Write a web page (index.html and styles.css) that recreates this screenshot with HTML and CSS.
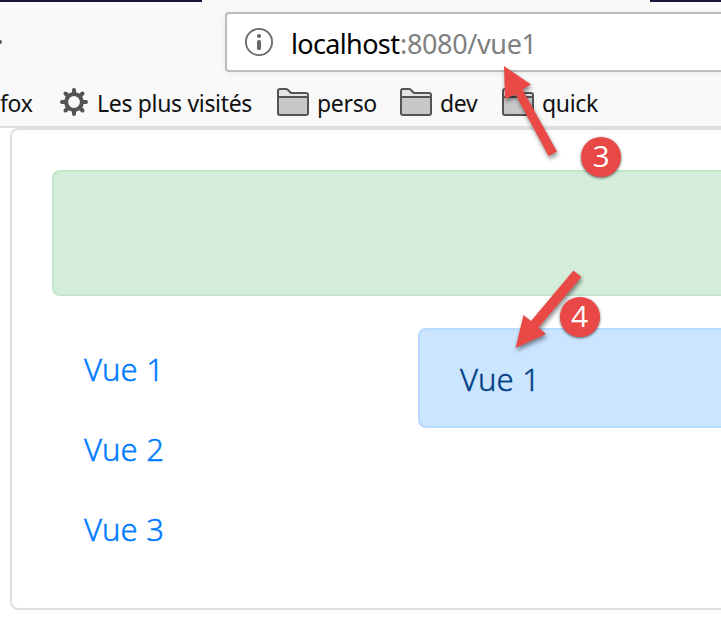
FILE: index.html
```html
<!DOCTYPE html>
<html lang="fr">
<head>
<meta charset="utf-8">
<title>Vue 1</title>
<link rel="stylesheet" href="styles.css">
</head>
<body>
<header class="browser">
  <div class="tabstrip"><span class="tab-left"></span><span class="tab-right"></span></div>
  <div class="navbar">
    <span class="nav-dot"></span>
    <div class="urlbar">
      <svg class="info" viewBox="0 0 28 28"><circle cx="14" cy="14" r="13.1" fill="none" stroke="#696969" stroke-width="1.8"/><circle cx="14" cy="8" r="2.1" fill="#696969"/><rect x="12" y="12" width="4" height="10" rx="1.5" fill="#696969"/></svg>
      <span class="host">localhost</span><span class="path">:8080/vue1</span>
    </div>
  </div>
  <nav class="bookmarks">
    <span class="label fox">fox</span>
    <svg class="gear" viewBox="0 0 28 28"><g stroke="#545456" stroke-width="4" stroke-linecap="round"><path d="M14 2v4M14 22v4M2 14h4M22 14h4M5.5 5.5l3 3M19.500 19.500l3 3M5.500 22.500l3-3M19.500 8.500l3-3"/></g><circle cx="14" cy="14" r="7.900" fill="#f9f9f9" stroke="#545456" stroke-width="4"/></svg>
    <span class="label visited">Les plus visités</span>
    <svg class="folder" viewBox="0 0 32 28"><path d="M1 9V3Q1 1 3 1H9Q10.500 1 11.500 2.500L14 5H29Q31 5 31 7V9Z" fill="#e4e4e6"/><path d="M1 9H31V25Q31 27 29 27H3Q1 27 1 25Z" fill="#c8c8ca"/><path d="M1 9H31M3 1H9Q10.500 1 11.500 2.500L14 5H29Q31 5 31 7V25Q31 27 29 27H3Q1 27 1 25V3Q1 1 3 1Z" fill="none" stroke="#545456" stroke-width="2"/></svg>
    <span class="label perso">perso</span>
    <svg class="folder" viewBox="0 0 32 28"><path d="M1 9V3Q1 1 3 1H9Q10.500 1 11.500 2.500L14 5H29Q31 5 31 7V9Z" fill="#e4e4e6"/><path d="M1 9H31V25Q31 27 29 27H3Q1 27 1 25Z" fill="#c8c8ca"/><path d="M1 9H31M3 1H9Q10.500 1 11.500 2.500L14 5H29Q31 5 31 7V25Q31 27 29 27H3Q1 27 1 25V3Q1 1 3 1Z" fill="none" stroke="#545456" stroke-width="2"/></svg>
    <span class="label dev">dev</span>
    <svg class="folder" viewBox="0 0 32 28"><path d="M1 9V3Q1 1 3 1H9Q10.500 1 11.500 2.500L14 5H29Q31 5 31 7V9Z" fill="#e4e4e6"/><path d="M1 9H31V25Q31 27 29 27H3Q1 27 1 25Z" fill="#c8c8ca"/><path d="M1 9H31M3 1H9Q10.500 1 11.500 2.500L14 5H29Q31 5 31 7V25Q31 27 29 27H3Q1 27 1 25V3Q1 1 3 1Z" fill="none" stroke="#545456" stroke-width="2"/></svg>
    <span class="label quick">quick</span>
  </nav>
</header>
<main class="card">
  <div class="alert-success"></div>
  <div class="row">
    <nav class="menu">
      <a class="link">Vue 1</a>
      <a class="link">Vue 2</a>
      <a class="link">Vue 3</a>
    </nav>
    <div class="alert-primary">Vue 1</div>
  </div>
</main>
<svg class="arrows" viewBox="0 0 721 643"><path d="M504 66L531 84.500L522.500 89.500L557 151.500L548.500 156L515.500 94.500L505 99Z"/><path d="M515.500 348L523.500 315L531 321L573.500 270.500L581.500 277L538.500 327.500L546 334Z"/></svg>
<span class="badge three">3</span>
<span class="badge four">4</span>
</body>
</html>
```
FILE: styles.css
```css
* { box-sizing: border-box; }
body {
  position: relative;
  margin: 0;
  width: 721px;
  height: 643px;
  overflow: hidden;
  background: #fff;
  font-family: "Noto Sans", sans-serif;
}
.browser {
  height: 128px;
  background: #f9f9f9;
  border-bottom: 2px solid #e0e0e0;
}
.tabstrip { display: flex; justify-content: space-between; height: 12px; }
.tabstrip span { height: 2px; background: #19183a; }
.tab-left { width: 202px; }
.tab-right { width: 71px; }
.navbar { display: flex; height: 60px; }
.nav-dot {
  width: 2px;
  height: 4px;
  margin: 28px 223px 0 0;
  background: #555;
  border-radius: 0 2px 2px 0;
}
.urlbar {
  flex: 1;
  display: flex;
  align-items: center;
  padding: 2px 0 0 18px;
  background: #fff;
  border: 2px solid #bcbcbc;
  border-right: 0;
  border-radius: 4px 0 0 4px;
  box-shadow: 0 1px 6px rgba(0, 0, 0, .07);
  font-size: 27px;
  white-space: nowrap;
}
.info { width: 28px; height: 28px; margin: -2px 18px 0 0; }
.host { width: 109px; color: #000; letter-spacing: -.65px; }
.path { color: #808080; letter-spacing: -.35px; }
.bookmarks {
  display: flex;
  align-items: center;
  height: 54px;
  padding-top: 8px;
  font-size: 23px;
  color: #111;
  white-space: nowrap;
}
.gear { flex: none; width: 28px; height: 28px; margin: -2px 9px 0 0; }
.folder { flex: none; width: 32px; height: 28px; margin: -2px 8px 0 0; }
.label { flex: none; height: 32px; line-height: 32px; letter-spacing: -.32px; }
.fox { width: 60px; }
.visited { width: 180px; }
.perso { width: 83px; }
.dev { width: 62px; }
.card {
  height: 482px;
  margin-left: 10px;
  padding: 40px 0 40px 40px;
  border: 2px solid #dfdfdf;
  border-right: 0;
  border-radius: 8px 0 0 8px;
}
.alert-success {
  height: 126px;
  margin-bottom: 32px;
  background: #d4edda;
  border: 2px solid #c3e6cb;
  border-right: 0;
  border-radius: 8px 0 0 8px;
}
.row {
  display: flex;
  align-items: flex-start;
  font-size: 31px;
  font-weight: 300;
  letter-spacing: .2px;
  -webkit-text-stroke: .4px currentColor;
}
.menu { display: flex; flex-direction: column; width: 366px; }
.link { height: 80px; padding: 17px 32px 15px; line-height: 48px; color: #007bff; }
.alert-primary {
  flex: 1;
  height: 100px;
  padding: 25px 40px;
  line-height: 48px;
  color: #004085;
  background: #cce5ff;
  border: 2px solid #b8daff;
  border-right: 0;
  border-radius: 8px 0 0 8px;
}
.arrows {
  position: absolute;
  inset: 0;
  fill: #ea4a46;
  filter: drop-shadow(1px 3px 2px rgba(0, 0, 0, .45));
}
.badge {
  position: absolute;
  width: 40px;
  height: 40px;
  border-radius: 50%;
  background: #e94846;
  box-shadow: 0 1px 3px rgba(0, 0, 0, .6);
  color: #fff;
  font-family: "Open Sans", sans-serif;
  font-size: 30px;
  line-height: 38px;
  text-align: center;
}
.three { left: 581px; top: 137px; }
.four { left: 559.5px; top: 297px; }
```
